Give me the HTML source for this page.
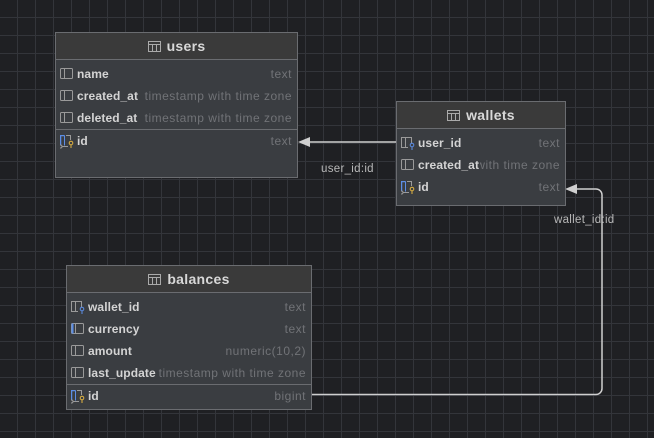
<!DOCTYPE html>
<html><head><meta charset="utf-8"><style>
body{margin:0;width:654px;height:438px;overflow:hidden;font-family:"Liberation Sans",sans-serif;
background-color:#1f2023;
background-image:linear-gradient(#33353a 1px,transparent 1px),linear-gradient(90deg,#33353a 1px,transparent 1px);
background-size:18px 18px;background-position:-1px -1px;position:relative}
.t{position:absolute;background:#3a3d41;border:1px solid #6a6c70;box-sizing:border-box}
.h{height:26px;background:#3a3a3a;border-bottom:1px solid #6a6c70;color:#d8d8d8;font-weight:bold;font-size:14px;display:flex;align-items:center;justify-content:center;gap:6px;letter-spacing:0.3px}
.r{height:22px;position:relative;font-size:12px;display:flex;align-items:center}
.r svg{position:absolute;left:4px;top:5px}
.n{position:absolute;left:21px;color:#d4d4d4;font-weight:bold;letter-spacing:0.1px}
.ty{position:absolute;right:5px;color:#717377;letter-spacing:0.5px}
.sep{border-top:1px solid #6a6c70}
.lbl{position:absolute;color:#b8b8b8;font-size:11.5px;letter-spacing:0.3px}
</style></head><body>
<svg width="0" height="0" style="position:absolute"><defs>
<g id="tb"><rect x="0.5" y="0.5" width="12" height="10" fill="none" stroke="#aaa"/><line x1="0.5" y1="3.5" x2="12.5" y2="3.5" stroke="#aaa"/><line x1="4.5" y1="3.5" x2="4.5" y2="10.5" stroke="#aaa"/><line x1="8.5" y1="3.5" x2="8.5" y2="10.5" stroke="#aaa"/></g>
<g id="col"><rect x="0.5" y="0.5" width="12" height="10" rx="1" fill="none" stroke="#9a9a9a"/><line x1="4.5" y1="0.5" x2="4.5" y2="10.5" stroke="#9a9a9a"/></g>
<g id="colb"><rect x="0.5" y="0.5" width="12" height="10" rx="1" fill="none" stroke="#9a9a9a"/><line x1="1.5" y1="0.5" x2="1.5" y2="10.5" stroke="#5c8ee6" stroke-width="2"/><line x1="4.5" y1="0.5" x2="4.5" y2="10.5" stroke="#9a9a9a"/></g>
<g id="fk"><path d="M10.5 6V0.5H0.5V10.5H7" fill="none" stroke="#9a9a9a"/><line x1="4.5" y1="0.5" x2="4.5" y2="10.5" stroke="#9a9a9a"/><circle cx="11" cy="8" r="1.8" fill="none" stroke="#5c8ee6"/><line x1="11" y1="10" x2="11" y2="13" stroke="#5c8ee6"/></g>
<g id="pk"><path d="M4.5 0.5H0.5V10.5" fill="none" stroke="#5c8ee6" stroke-width="1.5"/><path d="M6 0.5H10.5V5" fill="none" stroke="#9a9a9a"/><line x1="4.5" y1="0.5" x2="4.5" y2="10.5" stroke="#5c8ee6"/><circle cx="0.5" cy="11.5" r="1.5" fill="none" stroke="#9a9a9a"/><line x1="2" y1="11.5" x2="8" y2="11.5" stroke="#9a9a9a"/><circle cx="11" cy="8" r="1.8" fill="none" stroke="#e0b341"/><line x1="11" y1="10" x2="11" y2="13" stroke="#e0b341"/></g>
</defs></svg>

<svg width="654" height="438" style="position:absolute;left:0;top:0">
<line x1="396" y1="142" x2="308" y2="142" stroke="#cfcfcf" stroke-width="1.5"/>
<polygon points="298,142 310,137 310,147" fill="#cfcfcf"/>
<path d="M311 394.5H596a6 6 0 0 0 6-6V195a6 6 0 0 0-6-6H576" fill="none" stroke="#cfcfcf" stroke-width="1.5"/>
<polygon points="565,189 577,184 577,194" fill="#cfcfcf"/>
</svg>

<div class="t" style="left:55px;top:32px;width:243px;height:146px">
<div class="h"><svg width="13" height="11"><use href="#tb"/></svg>users</div>
<div style="height:3px"></div>
<div class="r"><svg width="16" height="14"><use href="#col"/></svg><span class="n">name</span><span class="ty">text</span></div>
<div class="r"><svg width="16" height="14"><use href="#col"/></svg><span class="n">created_at</span><span class="ty">timestamp with time zone</span></div>
<div class="r"><svg width="16" height="14"><use href="#col"/></svg><span class="n">deleted_at</span><span class="ty">timestamp with time zone</span></div>
<div class="sep"></div>
<div class="r"><svg width="16" height="14"><use href="#pk"/></svg><span class="n">id</span><span class="ty">text</span></div>
</div>

<div class="t" style="left:396px;top:101px;width:170px;height:105px">
<div class="h"><svg width="13" height="11"><use href="#tb"/></svg>wallets</div>
<div style="height:3px"></div>
<div class="r"><svg width="16" height="14"><use href="#fk"/></svg><span class="n">user_id</span><span class="ty">text</span></div>
<div class="r" style="overflow:hidden"><svg width="16" height="14"><use href="#col"/></svg><span class="ty">with time zone</span><span class="n" style="background:#3a3d41;padding-right:1px">created_at</span></div>
<div class="r"><svg width="16" height="14"><use href="#pk"/></svg><span class="n">id</span><span class="ty">text</span></div>
</div>

<div class="t" style="left:66px;top:265px;width:246px;height:145px">
<div class="h"><svg width="13" height="11"><use href="#tb"/></svg>balances</div>
<div style="height:3px"></div>
<div class="r"><svg width="16" height="14"><use href="#fk"/></svg><span class="n">wallet_id</span><span class="ty">text</span></div>
<div class="r"><svg width="16" height="14"><use href="#colb"/></svg><span class="n">currency</span><span class="ty">text</span></div>
<div class="r"><svg width="16" height="14"><use href="#col"/></svg><span class="n">amount</span><span class="ty">numeric(10,2)</span></div>
<div class="r"><svg width="16" height="14"><use href="#col"/></svg><span class="n">last_update</span><span class="ty">timestamp with time zone</span></div>
<div class="sep"></div>
<div class="r"><svg width="16" height="14"><use href="#pk"/></svg><span class="n">id</span><span class="ty">bigint</span></div>
</div>

<div class="lbl" style="left:321px;top:163px">user_id:id</div>
<div class="lbl" style="left:554px;top:214px">wallet_id:id</div>
</body></html>
